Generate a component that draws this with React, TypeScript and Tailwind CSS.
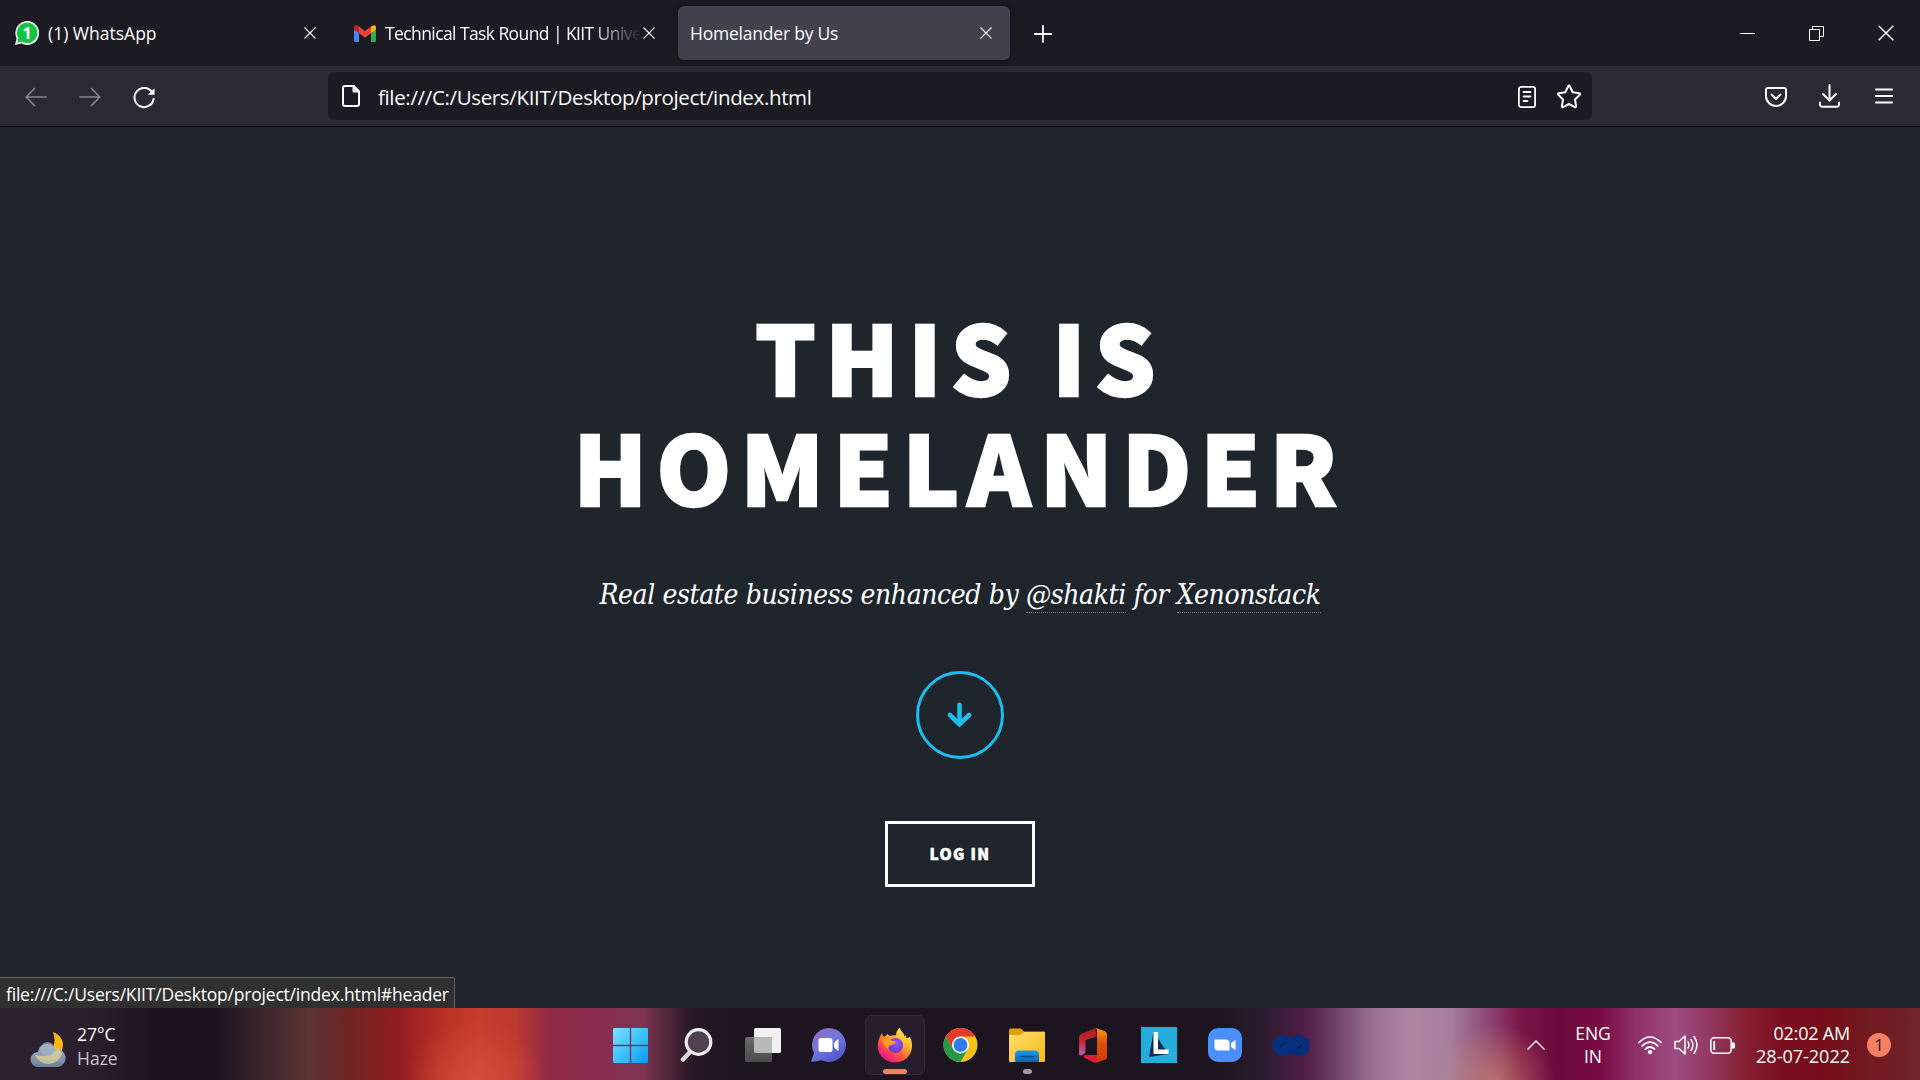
import React from "react";

const UI = "font-['Open_Sans','Noto_Sans',sans-serif]";

function CloseX({ size = 12, className = "" }: { size?: number; className?: string }) {
  return (
    <svg width={size} height={size} viewBox="0 0 12 12" className={className} fill="none" stroke="#fbfbfe" strokeWidth="1.1">
      <path d="M.5 .5l11 11M11.5 .5l-11 11" />
    </svg>
  );
}

function WhatsAppIcon() {
  return (
    <div className="relative h-6 w-6">
      <svg width="24" height="24" viewBox="0 0 24 24">
        <path d="M12.3 0A11.7 12 0 0 0 1.6 17.4L0 24l6.500-1.600A11.800 12 0 1 0 12.300 0z" fill="#eef5ef" />
        <path d="M12.300 1.700A10 10.200 0 0 0 3.300 17L2.400 21.600 7 20.500A10 10.200 0 1 0 12.300 1.700z" fill="#12c344" />
      </svg>
      <span className="absolute inset-0 text-center text-[16px] font-bold leading-6 text-white">1</span>
    </div>
  );
}

function GmailIcon() {
  return (
    <svg width="22" height="17" viewBox="0 0 22 17">
      <path d="M0 4l5 3.700V17H1.500A1.500 1.500 0 0 1 0 15.500z" fill="#4285f4" />
      <path d="M22 4l-5 3.700V17h3.500a1.500 1.500 0 0 0 1.500-1.500z" fill="#34a853" />
      <path d="M17 1.500L20 .2Q22 .2 22 2.500V4.500L17 8.200z" fill="#fbbc04" />
      <path d="M5 1.500L11 6l6-4.500v6.700L11 12.700 5 8.200z" fill="#ea4335" />
      <path d="M0 4.500V2.500Q0 0 2.200 0 3 0 5 1.500v6.700z" fill="#c5221f" />
    </svg>
  );
}

function TabBar() {
  return (
    <div className="flex h-[66px] w-full items-center bg-[#1c1b22] text-[17.5px] text-[#fbfbfe]">
      <div className="flex h-[54px] w-[332px] items-center pl-[15px] pr-2">
        <WhatsAppIcon />
        <span className="ml-[9px] flex-1 whitespace-nowrap pt-px">(1) WhatsApp</span>
        <CloseX className="mr-2" />
      </div>
      <div className="flex h-[54px] w-[346px] items-center pl-[22px]">
        <GmailIcon />
        <span className="ml-[9px] w-[256px] overflow-hidden whitespace-nowrap pt-px tracking-[-0.59px] [mask-image:linear-gradient(to_right,black_205px,transparent_256px)]">
          Technical Task Round | KIIT University
        </span>
        <CloseX className="ml-[2px]" />
      </div>
      <div className="flex h-[54px] w-[332px] items-center rounded-md bg-[#42414d] pl-3 pr-[18px] shadow-[0_0_5px_rgba(0,0,0,.5)]">
        <span className="flex-1 whitespace-nowrap pt-px tracking-[-0.22px]">Homelander by Us</span>
        <CloseX />
      </div>
      <svg className="ml-6 mt-[2px]" width="18" height="18" viewBox="0 0 18 18" stroke="#fbfbfe" strokeWidth="1.800" strokeLinecap="round">
        <path d="M9 .9v16.200M.9 9h16.200" />
      </svg>
      <div className="ml-auto flex items-center pr-[26px]">
        <div className="mr-[54px] h-px w-[15px] bg-white" />
        <svg className="mr-[54px]" width="15" height="15" viewBox="0 0 15 15" fill="none" stroke="#fff">
          <path d="M.5 3.500h10v11H.5zM3.500 3.500V.5h11v10h-4" />
        </svg>
        <CloseX size={16} />
      </div>
    </div>
  );
}

function Toolbar() {
  return (
    <div className="flex h-[61px] w-full items-center border-b border-[#0c0c0f] bg-[#2b2a33] text-[#fbfbfe]">
      <div className="flex w-[328px] items-center pl-[25px]">
        <svg className="mt-px" width="22" height="20" viewBox="0 0 22 20" fill="none" stroke="#85848b" strokeWidth="1.700" strokeLinecap="round" strokeLinejoin="round">
          <path d="M21 10H1.500M9.500 1.500L1.200 10l8.300 8.500" />
        </svg>
        <svg className="ml-8 mt-px" width="22" height="20" viewBox="0 0 22 20" fill="none" stroke="#85848b" strokeWidth="1.700" strokeLinecap="round" strokeLinejoin="round">
          <path d="M1 10h19.500M12.500 1.500L20.800 10l-8.300 8.500" />
        </svg>
        <svg className="ml-8 mt-1" width="22" height="22" viewBox="0 0 22 22" fill="none" stroke="#fbfbfe" strokeWidth="2" strokeLinecap="round">
          <path d="M19 5A9.600 9.600 0 1 0 20.600 12" />
          <path d="M21.500 1.200v6.600h-6.700z" fill="#fbfbfe" stroke="none" />
        </svg>
      </div>
      <div className="flex h-12 w-[1264px] items-center rounded-md bg-[#1c1b22] pl-[14px] pr-[10px]">
        <svg width="18" height="22" viewBox="0 0 18 22" fill="none" stroke="#fbfbfe" strokeWidth="2" strokeLinejoin="round">
          <path d="M3 1h8.500L17 6.500V19a2 2 0 0 1-2 2H3a2 2 0 0 1-2-2V3a2 2 0 0 1 2-2z" />
          <path d="M11.500 1v5.500H17z" fill="#fbfbfe" />
        </svg>
        <span className="ml-[18px] flex-1 whitespace-nowrap pt-[3px] text-[20.5px] tracking-[-0.35px]">file:///C:/Users/KIIT/Desktop/project/index.html</span>
        <svg className="mt-px" width="18" height="22" viewBox="0 0 18 22" fill="none" stroke="#fbfbfe" strokeWidth="1.800" strokeLinecap="round">
          <rect x=".9" y=".9" width="16.200" height="20.200" rx="2.200" />
          <path d="M5.500 6h7M5.500 10.500h7M5.500 15h4" />
        </svg>
        <svg className="ml-5 mt-px" width="26" height="25" viewBox="0 0 26 25" fill="none" stroke="#fbfbfe" strokeWidth="2" strokeLinejoin="round">
          <path d="M12.200 2.300q.8-1.500 1.600 0l2.900 6 6.600 1q1.500.4.5 1.500l-4.800 4.700 1.100 6.600q.1 1.500-1.300 1L13 20l-5.800 3.100q-1.400.5-1.300-1L7 15.500l-4.800-4.700q-1-1.100.5-1.500l6.600-1z" />
        </svg>
      </div>
      <div className="flex flex-1 items-center justify-end pr-[27px]">
        <svg className="mt-px" width="22" height="20" viewBox="0 0 22 20" fill="none" stroke="#fbfbfe" strokeWidth="2" strokeLinecap="round" strokeLinejoin="round">
          <path d="M3 1h16a2 2 0 0 1 2 2v6a10 10 0 0 1-20 0V3a2 2 0 0 1 2-2z" />
          <path d="M6.500 7.500L11 12l4.500-4.500" />
        </svg>
        <svg className="ml-8" width="21" height="24" viewBox="0 0 21 24" fill="none" stroke="#fbfbfe" strokeWidth="2" strokeLinecap="round" strokeLinejoin="round">
          <path d="M10.500 1v15M4 10l6.500 6.500L17 10M1 18.500v2A2.300 2.300 0 0 0 3.300 22.800h14.400A2.300 2.300 0 0 0 20 20.500v-2" />
        </svg>
        <svg className="ml-[35px]" width="18" height="16" viewBox="0 0 18 16" stroke="#fbfbfe" strokeWidth="1.800" strokeLinecap="round">
          <path d="M.9 1.500h16.200M.9 8h16.200M.9 14.500h16.200" />
        </svg>
      </div>
    </div>
  );
}

function Hero() {
  return (
    <main className="relative flex h-[881px] w-full flex-col items-center bg-[#1f252d] pt-[173px] text-white">
      <h1 className="text-center font-['Noto_Sans_CJK_JP',sans-serif] text-[95px] font-black leading-[110px] tracking-[9.400px] [-webkit-text-stroke:2.500px_white]">
        THIS IS
        <br />
        HOMELANDER
      </h1>
      <p className="mt-[50px] h-[50px] whitespace-nowrap font-['DejaVu_Serif_Condensed','DejaVu_Serif',serif] text-[28px] italic leading-[50px] tracking-[-0.39px]">
        Real estate business enhanced by <a className="border-b border-dotted border-[#70757a] pb-px">@shakti</a> for{" "}
        <a className="border-b border-dotted border-[#70757a] pb-px">Xenonstack</a>
      </p>
      <a className="mt-[51px] flex h-[88px] w-[88px] items-center justify-center rounded-full border-[3px] border-[#18bfef]">
        <svg width="26" height="26" viewBox="0 0 26 26" fill="none" stroke="#18bfef" strokeWidth="4.600" strokeLinecap="round">
          <path d="M12.500 2.700v19M3 13l9.500 9.300L22 13" strokeLinejoin="miter" />
        </svg>
      </a>
      <a className="mt-[62px] flex h-[66px] w-[150px] items-center justify-center border-[3px] border-white pb-px font-['Noto_Sans_CJK_JP',sans-serif] text-[15.500px] font-black tracking-[1.300px] [-webkit-text-stroke:.5px_white]">
        LOG IN
      </a>
      <div className="absolute bottom-0 left-0 flex h-[31px] w-[455px] items-center border-r border-t border-[#636363] bg-[#303030] pl-[6px] text-[17.5px]">
        <span className="whitespace-nowrap pt-[2px] tracking-[-0.2px]">file:///C:/Users/KIIT/Desktop/project/index.html#header</span>
      </div>
    </main>
  );
}

function WeatherIcon() {
  return (
    <svg width="36" height="36" viewBox="0 0 36 36">
      <defs>
        <linearGradient id="cloud" x1="0" y1="0" x2="0" y2="1">
          <stop offset="0" stopColor="#b4c3d6" />
          <stop offset="1" stopColor="#74879e" />
        </linearGradient>
      </defs>
      <path d="M23 0c8 3 12 10 9 18s-12 13-21 10c-3-1-5-3-6-5 9 2 16-1 18-8 2-5 2-9 0-15z" fill="#fcb913" />
      <path d="M8 35a7.500 7.500 0 0 1 0-15 9 9 0 0 1 17-3 9 9 0 0 1 3 18z" fill="url(#cloud)" opacity=".92" />
      <path d="M5 23q14 4 22-6 4 1 5 5-3 9-13 10-10 0-14-9z" fill="#dcd29a" opacity=".75" />
      <circle cx="17.500" cy="17" r="7" fill="#9fb0c6" opacity=".7" />
    </svg>
  );
}

function StartIcon() {
  return (
    <svg width="35" height="35" viewBox="0 0 35 35">
      <defs>
        <linearGradient id="win" x1="0" y1="0" x2="1" y2="1">
          <stop offset="0" stopColor="#7fdfff" />
          <stop offset=".5" stopColor="#3dc4fb" />
          <stop offset="1" stopColor="#0a97fb" />
        </linearGradient>
      </defs>
      <path d="M1 0h15.800v16.800H0V1a1 1 0 0 1 1-1zM18.200 0H34a1 1 0 0 1 1 1v15.800H18.200zM0 18.200h16.800V35H1a1 1 0 0 1-1-1zM18.200 18.200H35V34a1 1 0 0 1-1 1H18.200z" fill="url(#win)" />
    </svg>
  );
}

function SearchIcon() {
  return (
    <svg width="33" height="34" viewBox="0 0 33 34">
      <path d="M10 24L3 31.500" stroke="#d9d9d9" strokeWidth="4.500" strokeLinecap="round" />
      <circle cx="18.500" cy="14" r="12.300" fill="#51404d" stroke="#eeeeee" strokeWidth="3.200" />
    </svg>
  );
}

function TaskViewIcon() {
  return (
    <svg width="36" height="34" viewBox="0 0 36 34">
      <defs>
        <linearGradient id="tv" x1="0" y1="0" x2="0" y2="1">
          <stop offset="0" stopColor="#6a6a6a" />
          <stop offset="1" stopColor="#4b4b4b" />
        </linearGradient>
      </defs>
      <rect x="9" y="0" width="27" height="25" rx="1.500" fill="#f1f1f1" />
      <rect x="0" y="9" width="27" height="25" rx="1.500" fill="url(#tv)" />
      <path d="M9 9h18v16H10.500A1.500 1.500 0 0 1 9 23.500z" fill="#b9b9b9" />
    </svg>
  );
}

function ChatIcon() {
  return (
    <svg width="35" height="34" viewBox="0 0 35 34">
      <defs>
        <linearGradient id="chat" x1="0" y1="0" x2=".7" y2="1">
          <stop offset="0" stopColor="#9a68b8" />
          <stop offset=".5" stopColor="#7478dc" />
          <stop offset="1" stopColor="#5255cb" />
        </linearGradient>
      </defs>
      <path d="M18 0a17 17 0 1 1-7.500 32.300L1.500 34q-1.500 0-1.200-1.500L3 25A17 17 0 0 1 18 0z" fill="url(#chat)" />
      <rect x="7.500" y="10" width="14" height="14" rx="2.500" fill="#fff" />
      <path d="M23 15l3.500-3.500q1-.5 1 .5v10q0 1-1 .5L23 19z" fill="#fff" />
    </svg>
  );
}

function FirefoxIcon() {
  return (
    <svg width="36" height="36" viewBox="0 0 36 36">
      <defs>
        <linearGradient id="fx" x1=".85" y1=".1" x2=".25" y2=".95">
          <stop offset="0" stopColor="#fff04a" />
          <stop offset=".35" stopColor="#ffb02c" />
          <stop offset=".65" stopColor="#ff5a3c" />
          <stop offset="1" stopColor="#e8128b" />
        </linearGradient>
        <radialGradient id="fxin" cx=".55" cy=".35" r=".7">
          <stop offset="0" stopColor="#9059ff" />
          <stop offset="1" stopColor="#6a2fc4" />
        </radialGradient>
      </defs>
      <path d="M5 6c.3 2 1 3 2 3.700C9 8.500 10 8 10.500 6.500c.8 1.500 1.500 2.200 3 2.500 2-.8 4-1 5.500-.5C19 5 20.500 2.500 23 .5c.2 2.500 1.500 4 3.500 6l1 3 1.500-1.500.5 3.500L33 10c1.500 3 2.300 6 2 10-.5 9-8 15.500-17 15.500S1 29 .8 19.500C.7 14 3 9 5 6z" fill="url(#fx)" />
      <circle cx="18.500" cy="18.500" r="7.500" fill="url(#fxin)" />
      <path d="M5 12c3-1.500 6-1.500 9 1 2 1.300 4.500 1 4.500 2 0 2-2.500 2.500-4.500 3-2 1-3 2-3 4-3-2-6-6-6-10z" fill="#ff9a2c" />
    </svg>
  );
}

function ChromeIcon() {
  return (
    <svg width="35" height="34" viewBox="-17.500 -17 35 34">
      <circle r="17" fill="#fbc116" />
      <path d="M-14.720-8.500A17 17 0 0 1 14.720-8.500L0-8.500-7.360 4.250z" fill="#e33b2e" />
      <path d="M-14.720-8.500A17 17 0 0 0 0 17L7.360 4.250-7.360 4.250z" fill="#249a46" />
      <circle r="8.500" fill="#fff" />
      <circle r="6.900" fill="#2f7bf0" />
    </svg>
  );
}

function FolderIcon() {
  return (
    <svg width="36" height="34" viewBox="0 0 36 34">
      <defs>
        <linearGradient id="folder" x1="0" y1="0" x2="1" y2="1">
          <stop offset="0" stopColor="#ffdf70" />
          <stop offset="1" stopColor="#f9b914" />
        </linearGradient>
        <linearGradient id="tray" x1="0" y1="0" x2="0" y2="1">
          <stop offset="0" stopColor="#1b9be4" />
          <stop offset="1" stopColor="#0c63b8" />
        </linearGradient>
      </defs>
      <path d="M0 2q0-1.500 1.500-1.500H11q1 0 1.800.8L15 3.500h20q1 0 1 1V10H0z" fill="#e2a100" />
      <path d="M0 7h10.500q1 0 1.800-.7L15 4h20q1 0 1 1v28q0 1-1 1H1q-1 0-1-1z" fill="url(#folder)" />
      <path d="M6 34v-7.500q0-4 4-4h16q4 0 4 4V34z" fill="url(#tray)" />
      <path d="M11.500 28.500h13" stroke="#0a4a86" strokeWidth="1.500" strokeLinecap="round" />
    </svg>
  );
}

function OfficeIcon() {
  return (
    <svg width="28" height="35" viewBox="0 0 28 35">
      <defs>
        <linearGradient id="offL" x1="0" y1="0" x2="0" y2="1">
          <stop offset="0" stopColor="#a81b1b" />
          <stop offset=".5" stopColor="#c8282e" />
          <stop offset="1" stopColor="#b762b8" />
        </linearGradient>
        <linearGradient id="offR" x1="0" y1="0" x2="0" y2="1">
          <stop offset="0" stopColor="#fa9a0c" />
          <stop offset=".4" stopColor="#e05206" />
          <stop offset="1" stopColor="#d03a02" />
        </linearGradient>
      </defs>
      <path d="M16.500 0L2 6Q0 7 0 9.500V26q0 2 2 1.500l3-1.500q1.500-1 1.500-3V12l11-3.500z" fill="url(#offL)" />
      <path d="M5 29.500L15.500 34.800 19 34V27H7q-4 .8-2 2.500z" fill="#e01b35" />
      <path d="M16.500 0L26 3.200q2 .8 2 3V29q0 2-2 2.700L16 35q2-1 2-3V3q0-2-1.500-3z" fill="url(#offR)" />
    </svg>
  );
}

function LIcon() {
  return (
    <svg width="36" height="36" viewBox="0 0 36 36">
      <path d="M0 0h36v36H0z" fill="#25aedb" />
      <path d="M12.500 5L8 30l19.500-3z" fill="#0d2a58" />
      <path d="M12.500 5H17v17.500h10.500V27h-15z" fill="#fff" />
    </svg>
  );
}

function ZoomIcon() {
  return (
    <svg width="34" height="34" viewBox="0 0 34 34">
      <rect width="34" height="34" rx="10" fill="#4a90fd" />
      <path d="M6.500 11.500h11.500q3.500 0 3.500 3.500v7.500H10q-3.500 0-3.500-3.500zM23 15.300l4.500-3.500v10.500L23 19z" fill="#fff" />
    </svg>
  );
}

function RibbonIcon() {
  return (
    <svg width="36" height="23" viewBox="0 0 36 23">
      <path d="M10 0l7 4 8.500-4L36 6v11l-9.500 6-8-4.500L10 23 0 17V6z" fill="#042f7c" />
      <path d="M7 12l5-3.500M24 14.500l5-3.500" stroke="#1d1626" strokeWidth="1" />
    </svg>
  );
}

function Taskbar() {
  return (
    <footer className="flex h-[72px] w-full items-center bg-[radial-gradient(ellipse_60px_60px_at_1495px_75px,rgba(215,150,110,.6),transparent),radial-gradient(ellipse_70px_60px_at_475px_72px,rgba(220,85,65,.7),transparent),linear-gradient(to_right,#2b2330_0px,#2c1d2c_90px,#1d1320_150px,#1b1320_215px,#36232a_255px,#5c3434_310px,#6e2424_345px,#931c20_400px,#b53026_440px,#c63c2e_480px,#bd3830_515px,#8f2a45_550px,#8a2b50_600px,#7f3552_642px,#55293c_665px,#2a1825_690px,#1c141f_730px,#1c141f_1220px,#2c1c30_1262px,#501e45_1305px,#6a3a60_1330px,#946f8c_1370px,#ad87a2_1410px,#a5809c_1450px,#8d4474_1490px,#7c1548_1520px,#6c0a3c_1560px,#780c42_1600px,#8f3068_1635px,#9f4c82_1675px,#933a66_1705px,#862034_1745px,#7a1020_1780px,#750c18_1820px,#72181f_1860px,#702428_1920px)] pt-[2px] text-white">
      <div className="flex w-[613px] items-center pl-[30px]">
        <div className="mt-[11px] h-9 w-9 self-start">
          <WeatherIcon />
        </div>
        <div className="ml-[11px] pt-px text-[17.5px] leading-6">
          <div>27°C</div>
          <div className="text-[#c9c4ca]">Haze</div>
        </div>
      </div>
      <StartIcon />
      <div className="ml-8"><SearchIcon /></div>
      <div className="ml-8"><TaskViewIcon /></div>
      <div className="ml-[30px]"><ChatIcon /></div>
      <div className="relative ml-[19px] flex h-[60px] w-[60px] items-center justify-center rounded-md border border-[#332936] bg-[#271d2c]">
        <FirefoxIcon />
        <div className="absolute bottom-0 left-[17px] h-[5px] w-6 rounded-full bg-[#f77f63]" />
      </div>
      <div className="ml-[18px]"><ChromeIcon /></div>
      <div className="relative ml-[31px]">
        <FolderIcon />
        <div className="absolute -bottom-3 left-[14px] h-[5px] w-[9px] rounded-full bg-[#9c979f]" />
      </div>
      <div className="ml-[34px]"><OfficeIcon /></div>
      <div className="ml-[34px]"><LIcon /></div>
      <div className="ml-[31px]"><ZoomIcon /></div>
      <div className="ml-[31px]"><RibbonIcon /></div>
      <div className="ml-auto flex items-center pr-[29px]">
        <svg width="18" height="10" viewBox="0 0 18 10" fill="none" stroke="#fff" strokeWidth="1.300">
          <path d="M.5 9.500L9 1l8.500 8.500" />
        </svg>
        <div className="ml-[26px] w-[44px] text-center text-[17.5px] leading-[23px]">
          <div>ENG</div>
          <div>IN</div>
        </div>
        <svg className="ml-[23px]" width="24" height="19" viewBox="0 0 24 19" fill="none" stroke="#fff" strokeWidth="1.700" strokeLinecap="round">
          <path d="M1 6.500Q12-4.500 23 6.500M4.200 9.800q7.800-7.500 15.600 0M7.500 13q4.500-4 9 0" />
          <circle cx="12" cy="16.200" r="2.100" fill="#fff" stroke="none" />
        </svg>
        <svg className="ml-3" width="24" height="20" viewBox="0 0 24 20" fill="none" stroke="#fff" strokeWidth="1.500" strokeLinecap="round" strokeLinejoin="round">
          <path d="M1 6.500h4L11 1v18l-6-5.500H1zM14 7q1.800 3 0 6M17 4.500q3.800 5.500 0 11M20 1.500q6 8.500 0 17" />
        </svg>
        <svg className="ml-3" width="25" height="17" viewBox="0 0 25 17" fill="none" stroke="#fff" strokeWidth="1.600">
          <rect x=".8" y=".8" width="20.400" height="15.400" rx="3.500" />
          <path d="M4.200 4v9" strokeWidth="1.800" />
          <path d="M22 5.500h2q1 0 1 1v4q0 1-1 1h-2z" fill="#fff" stroke="none" />
        </svg>
        <div className="w-[115px] whitespace-nowrap text-right text-[18px] leading-[23px]">
          <div className="tracking-[-0.2px]">02:02 AM</div>
          <div>28-07-2022</div>
        </div>
        <div className="ml-[17px] h-6 w-6 rounded-full bg-[#f77f63] text-center text-[16px] leading-6 text-[#2a1010]">1</div>
      </div>
    </footer>
  );
}

export default function App() {
  return (
    <div className={`h-[1080px] w-[1920px] overflow-hidden ${UI}`}>
      <TabBar />
      <Toolbar />
      <Hero />
      <Taskbar />
    </div>
  );
}
